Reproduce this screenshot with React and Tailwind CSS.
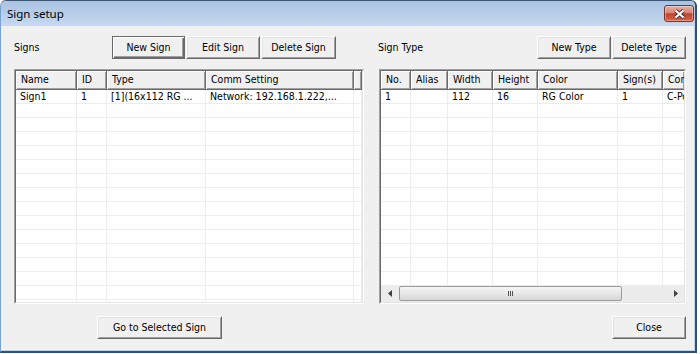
const signCols = [
  { label: 'Name', w: 'w-[61px]' },
  { label: 'ID', w: 'w-[30px]' },
  { label: 'Type', w: 'w-[99px]' },
  { label: 'Comm Setting', w: 'w-[148px]' },
  { label: '', w: 'flex-1' },
];
const signRows = [['Sign1', '1', '[1](16x112 RG ...', 'Network: 192.168.1.222,...', '']];

const typeCols = [
  { label: 'No.', w: 'w-[30px]' },
  { label: 'Alias', w: 'w-[37px]' },
  { label: 'Width', w: 'w-[45px]' },
  { label: 'Height', w: 'w-[45px]' },
  { label: 'Color', w: 'w-[80px]' },
  { label: 'Sign(s)', w: 'w-[45px]' },
  { label: 'Comm Setting', w: 'w-[22px]' },
];
const typeRows = [['1', '', '112', '16', 'RG Color', '1', 'C-Power']];

function Button({ children, className = '', isDefault }) {
  const edge = isDefault
    ? 'border border-[#696969] shadow-[inset_1px_1px_0_#fff,inset_-1px_-1px_0_#696969,inset_-2px_-2px_0_#a0a0a0]'
    : 'border border-t-white border-l-white border-r-[#696969] border-b-[#696969] shadow-[inset_1px_1px_0_#e3e3e3,inset_-1px_-1px_0_#a0a0a0]';
  return (
    <button className={`h-[23px] shrink-0 flex items-center justify-center bg-[#f0f0f0] ${edge} ${className}`}>
      {children}
    </button>
  );
}

function Arrow({ dir }) {
  return (
    <div className="w-[17px] h-[17px] shrink-0 flex items-center justify-center">
      <svg width="4" height="7" viewBox="0 0 4 7">
        {dir === 'left' ? <path d="M4 0 L0 3.5 L4 7 Z" fill="#404040" /> : <path d="M0 0 L4 3.5 L0 7 Z" fill="#404040" />}
      </svg>
    </div>
  );
}

function ListView({ cols, rows, count, scroll }) {
  const blank = cols.map(() => '');
  const all = [...rows, ...Array.from({ length: count - rows.length }, () => blank)];
  return (
    <div className="h-[235px] border border-t-[#a0a0a0] border-l-[#a0a0a0] border-r-white border-b-white">
      <div className="h-full flex flex-col bg-white overflow-hidden border border-t-[#696969] border-l-[#696969] border-r-[#e3e3e3] border-b-[#e3e3e3]">
        <div className="flex-1 overflow-hidden">
          <div className="flex h-[19px]">
            {cols.map((c, i) => (
              <div
                key={i}
                className={`${c.w} shrink-0 h-full flex items-center pl-[5px] whitespace-nowrap overflow-hidden bg-[#f0f0f0] border-r border-b border-[#696969] shadow-[inset_1px_1px_0_#fff,inset_-1px_-1px_0_#a0a0a0]`}
              >
                {c.label}
              </div>
            ))}
          </div>
          {all.map((r, ri) => (
            <div key={ri} className="flex h-[14px]">
              {cols.map((c, i) => (
                <div
                  key={i}
                  className={`${c.w} shrink-0 h-full flex items-center pl-[4px] whitespace-nowrap overflow-hidden border-r border-b border-[#ededed]`}
                >
                  {r[i]}
                </div>
              ))}
            </div>
          ))}
        </div>
        {scroll && (
          <div className="h-[17px] shrink-0 flex bg-[#ececec]">
            <Arrow dir="left" />
            <div className="flex-1 flex items-center pl-px">
              <div className="w-[223px] h-[15px] rounded-[2px] border border-[#9a9a9a] bg-linear-to-b from-[#f6f6f6] to-[#d8d8d8] flex items-center justify-center gap-[1px]">
                <span className="w-px h-[5px] bg-[#555]" />
                <span className="w-px h-[5px] bg-[#555]" />
                <span className="w-px h-[5px] bg-[#555]" />
              </div>
            </div>
            <Arrow dir="right" />
          </div>
        )}
      </div>
    </div>
  );
}

export default function App() {
  return (
    <div className="w-[700px] h-[354px] bg-white">
      <div className="w-[697px] h-[353px] flex flex-col overflow-hidden rounded-t-[6px] border-t border-l border-r-2 border-b-2 border-t-[#3d5775] border-l-[#7ba2cf] border-r-[#34506f] border-b-[#34506f] bg-[#bcd6ef]">
        {/* title bar */}
        <div className="h-[25px] shrink-0 flex justify-between pl-[6px] pr-px bg-linear-to-b from-[#a9c3e2] to-[#c6d9ef]">
          <span className="self-center font-['Noto_Sans',sans-serif] text-[11.5px] text-black">Sign setup</span>
          <button className="mt-[4px] w-[30px] h-[17px] flex items-center justify-center rounded-[3px] border border-[#7b3326] bg-[linear-gradient(#eab0a2,#d98573_45%,#c2402b_52%,#d3674f)] shadow-[inset_0_0_0_1px_rgba(255,255,255,0.35)]">
            <svg width="13" height="10" viewBox="0 0 13 10">
              <path d="M2.5 1.5 L10.5 8.5 M10.5 1.5 L2.5 8.5" stroke="#4a2a24" strokeWidth="3.8" />
              <path d="M2.5 1.5 L10.5 8.5 M10.5 1.5 L2.5 8.5" stroke="#fff" strokeWidth="2.2" />
            </svg>
          </button>
        </div>

        {/* client */}
        <div className="flex-1 mr-px mb-px pl-[13px] pt-[10px] bg-[#f0f0f0] font-['DejaVu_Sans_Condensed','DejaVu_Sans',sans-serif] text-[10.5px] text-black">
          <div className="grid grid-cols-[350px_307px] gap-x-[15px]">
            <div className="flex items-center h-[23px]">
              <span className="w-[98px]">Signs</span>
              <div className="flex gap-px">
                <Button isDefault className="w-[73px]">New Sign</Button>
                <Button className="w-[74px]">Edit Sign</Button>
                <Button className="w-[75px]">Delete Sign</Button>
              </div>
            </div>
            <div className="flex items-center justify-between h-[23px]">
              <span className="-ml-px">Sign Type</span>
              <div className="flex gap-px">
                <Button className="w-[74px]">New Type</Button>
                <Button className="w-[74px]">Delete Type</Button>
              </div>
            </div>
          </div>

          <div className="grid grid-cols-[350px_307px] gap-x-[15px] mt-[10px]">
            <ListView cols={signCols} rows={signRows} count={16} />
            <ListView cols={typeCols} rows={typeRows} count={14} scroll />
          </div>

          <div className="grid grid-cols-[350px_307px] gap-x-[15px] mt-[12px]">
            <div className="pl-[83px]">
              <Button className="w-[125px]">Go to Selected Sign</Button>
            </div>
            <div className="flex justify-end">
              <Button className="w-[74px]">Close</Button>
            </div>
          </div>
        </div>
      </div>
    </div>
  );
}
